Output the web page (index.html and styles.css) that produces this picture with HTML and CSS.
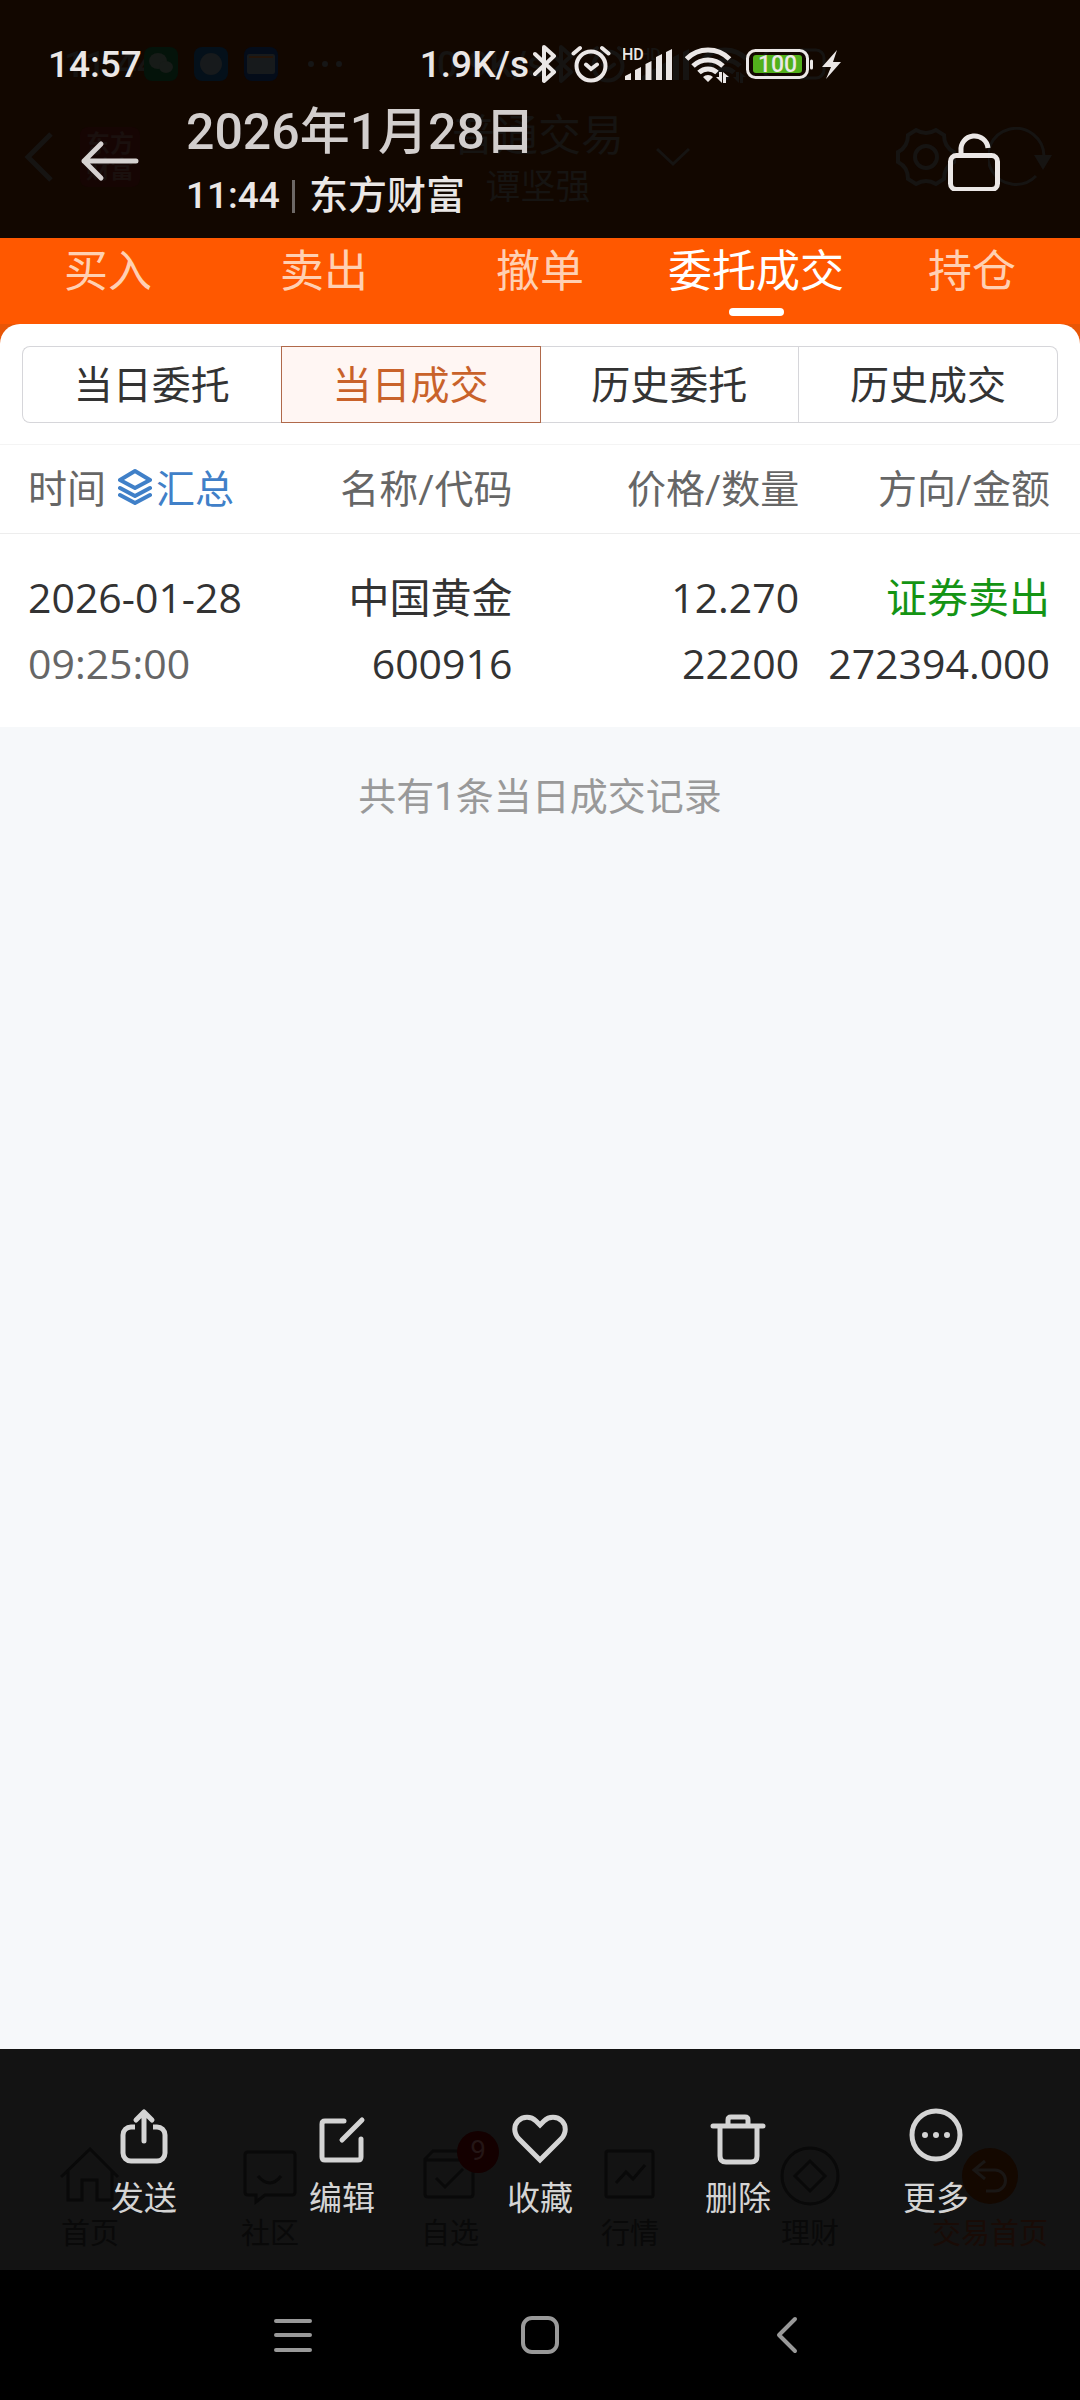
FILE: index.html
```html
<!DOCTYPE html>
<html lang="zh-CN">
<head>
    <meta charset="UTF-8">
    <meta name="viewport" content="width=device-width, initial-scale=1.0">
    <title>当日成交</title>
    <link rel="stylesheet" href="styles.css">
</head>
<body>
    <!-- Shared status bar icons -->
    <svg class="sprite" aria-hidden="true">
        <symbol id="bluetooth" viewBox="0 0 26 40">
            <path d="M2 10 21 28 11 37V3L21 12 2 30" fill="none" stroke="currentColor" stroke-width="4" stroke-linejoin="round" stroke-linecap="round"/>
        </symbol>
        <symbol id="alarm" viewBox="0 0 40 40">
            <g fill="none" stroke="currentColor" stroke-width="4" stroke-linecap="round">
                <circle cx="20" cy="22" r="14.5"/>
                <path d="M15 20.500l5 4.500 6-4.500M2.500 9.500 9 4M37.500 9.500 31 4"/>
            </g>
        </symbol>
        <symbol id="signal" viewBox="0 0 50 40">
            <text x="-1" y="16" font-size="16" font-weight="500" fill="currentColor">HD</text>
            <path d="M2 36v-4l6-3v7zM12 36V26l6-3v13zM22.500 36V20l6-3v19zM33 36V13l6-3v26zM43 36V8l6-3v31z" fill="currentColor"/>
        </symbol>
        <symbol id="wifi" viewBox="0 0 48 40">
            <g fill="none" stroke="currentColor" stroke-width="5">
                <path d="M1.500 15a30 30 0 0 1 43 0M8 22a21.500 21.500 0 0 1 30 0M14 28.500a13 13 0 0 1 18 0"/>
            </g>
            <path d="M18 33a7 7 0 0 1 10 0l-5 5zM31 33h3v-5h3v11zM38 39V28l6 5h-3v6z" fill="currentColor"/>
        </symbol>
        <symbol id="battery" viewBox="0 0 96 40">
            <rect x="2.500" y="6.500" width="60" height="27" rx="8" fill="none" stroke="currentColor" stroke-width="3"/>
            <rect class="charge" x="8" y="11" width="49" height="18" rx="3"/>
            <path d="M66.500 17v7" stroke="currentColor" stroke-width="3" stroke-linecap="round"/>
            <text x="32.500" y="28" font-size="23" font-weight="500" text-anchor="middle" fill="currentColor">100</text>
            <path d="M92 6 77 23h9l-5 12 15-17h-8z" fill="currentColor"/>
        </symbol>
    </svg>

    <header class="viewer-top">
        <div class="behind" aria-hidden="true">
            <div class="status-bar behind-status">
                <span class="time">11:44</span>
                <span class="notif">
                    <svg width="34" height="36" viewBox="0 0 34 36"><rect y="1" width="34" height="34" rx="8" fill="#04130a"/><ellipse cx="14" cy="15" rx="9" ry="8" fill="#171b18"/><ellipse cx="22" cy="21" rx="7" ry="6" fill="#171b18"/></svg>
                    <svg width="34" height="36" viewBox="0 0 34 36"><rect y="1" width="34" height="34" rx="8" fill="#04101a"/><circle cx="17" cy="18" r="11" fill="#171a1c"/></svg>
                    <svg width="34" height="36" viewBox="0 0 34 36"><rect y="1" width="34" height="34" rx="8" fill="#040c19"/><rect x="3" y="8" width="28" height="20" rx="2" fill="#171a1c"/><path d="M5 11h24" stroke="#24150a" stroke-width="2"/></svg>
                    <svg class="dots" width="34" height="36" viewBox="0 0 34 36" fill="#161616"><circle cx="17" cy="18" r="3"/><circle cx="3" cy="18" r="3"/><circle cx="31" cy="18" r="3"/></svg>
                </span>
                <span class="status-icons">
                    <span class="net"><span>0.9K/s</span><svg width="26" height="40"><use href="#bluetooth"/></svg></span>
                    <svg width="40" height="40"><use href="#alarm"/></svg>
                    <svg width="50" height="40"><use href="#signal"/></svg>
                    <svg width="48" height="40"><use href="#wifi"/></svg>
                    <svg width="96" height="40" viewBox="0 0 96 40"><rect x="2" y="6" width="60" height="28" rx="8" fill="none" stroke="currentColor" stroke-width="3"/></svg>
                </span>
            </div>
            <div class="behind-bar">
                <span class="behind-side">
                    <svg width="30" height="52" viewBox="0 0 30 52"><path d="M27 3 4 26l23 23" fill="none" stroke="currentColor" stroke-width="5"/></svg>
                    <span class="behind-logo">东方<br>财富</span>
                </span>
                <span class="behind-title">
                    <span class="behind-name">普通交易<small>谭坚强</small></span>
                    <svg width="34" height="20" viewBox="0 0 34 20"><path d="M1 2l16 15L33 2" fill="none" stroke="currentColor" stroke-width="3"/></svg>
                </span>
                <span class="behind-side behind-right">
                    <svg width="60" height="60" viewBox="0 0 60 60" fill="none" stroke="currentColor" stroke-width="4"><path d="M20 3q10 6 20 0l8 5q0 12 10 17v10q-10 5-10 17l-8 5q-10-6-20 0l-8-5q0-12-10-17V25q10-5 10-17z"/><circle cx="30" cy="30" r="11"/></svg>
                    <svg width="64" height="60" viewBox="0 0 64 60"><path d="M48 49A28 28 0 1 1 56 30" fill="none" stroke="currentColor" stroke-width="3"/><path d="M46 28h18l-9 15z" fill="currentColor"/></svg>
                </span>
            </div>
        </div>

        <div class="status-bar">
            <span class="time">14:57</span>
            <span class="status-icons">
                <span class="net"><span>1.9K/s</span><svg width="26" height="40"><use href="#bluetooth"/></svg></span>
                <svg width="40" height="40"><use href="#alarm"/></svg>
                <svg width="50" height="40"><use href="#signal"/></svg>
                <svg width="48" height="40"><use href="#wifi"/></svg>
                <svg width="96" height="40"><use href="#battery"/></svg>
            </span>
        </div>

        <div class="title-bar">
            <button type="button" class="icon-button" aria-label="返回">
                <svg width="60" height="60" viewBox="0 0 60 60" fill="none" stroke="#d6d2d1" stroke-width="5" stroke-linecap="round" stroke-linejoin="round"><path d="M21 13 4 30l17 17M4 30h52"/></svg>
            </button>
            <div class="title-text">
                <h1>2026年1月28日</h1>
                <p><span>11:44</span><span class="source">东方财富</span></p>
            </div>
            <button type="button" class="icon-button" aria-label="解锁">
                <svg width="60" height="60" viewBox="0 0 60 60" fill="none" stroke="#ebe7e6" stroke-width="5"><rect x="6.500" y="24.500" width="47" height="34" rx="6"/><path d="M17 25v-5a13.500 13.500 0 0 1 27-3"/></svg>
            </button>
        </div>
    </header>

    <nav class="tabs">
        <button type="button">买入</button>
        <button type="button">卖出</button>
        <button type="button">撤单</button>
        <button type="button" class="active">委托成交</button>
        <button type="button">持仓</button>
    </nav>

    <main>
        <div class="panel-edge">
            <section class="panel">
                <div class="segments">
                    <button type="button">当日委托</button>
                    <button type="button" class="active">当日成交</button>
                    <button type="button">历史委托</button>
                    <button type="button">历史成交</button>
                </div>

                <table class="deals">
                    <thead>
                        <tr>
                            <th>
                                <span class="time-head">时间
                                    <button type="button" class="summary">
                                        <svg width="34" height="38" viewBox="0 0 34 38" fill="none" stroke="currentColor" stroke-width="4" stroke-linejoin="round" stroke-linecap="round"><path d="M17 4 32 13 17 21 2 13zM2 21l15 8 15-8M2 28l15 8 15-8"/></svg>汇总
                                    </button>
                                </span>
                            </th>
                            <th>名称/代码</th>
                            <th>价格/数量</th>
                            <th>方向/金额</th>
                        </tr>
                    </thead>
                    <tbody>
                        <tr>
                            <td>2026-01-28<span class="muted">09:25:00</span></td>
                            <td>中国黄金<span>600916</span></td>
                            <td>12.270<span>22200</span></td>
                            <td><b class="sell">证券卖出</b><span>272394.000</span></td>
                        </tr>
                    </tbody>
                </table>
            </section>
        </div>
        <p class="count">共有1条当日成交记录</p>
    </main>

    <footer class="viewer-bottom">
        <div class="behind behind-tabs" aria-hidden="true">
            <span>
                <svg width="60" height="60" viewBox="0 0 60 60"><path d="M1 31 30 3l28 28M8 25v29h14V34h15v20h15V25"/></svg>
                首页
            </span>
            <span>
                <svg width="60" height="60" viewBox="0 0 60 60"><path d="M8 6h44q3 0 3 3v37q0 3-3 3H25l-9 7v-7H8q-3 0-3-3V9q0-3 3-3zM18 30q12 14 23 0"/></svg>
                社区
            </span>
            <span>
                <svg width="60" height="60" viewBox="0 0 60 60"><path d="M5 14h48v34q0 3-3 3H8q-3 0-3-3V13l8-8h32l8 8M16 32l9 9 18-18"/></svg>
                <i class="badge">9</i>
                自选
            </span>
            <span>
                <svg width="60" height="60" viewBox="0 0 60 60"><rect x="6" y="5" width="47" height="46" rx="2"/><path d="M16 37l10-11 7 7 12-14"/></svg>
                行情
            </span>
            <span>
                <svg width="60" height="60" viewBox="0 0 60 60"><circle cx="30" cy="30" r="28"/><path d="M30 15l15 15-15 15-15-15z"/></svg>
                理财
            </span>
            <span class="behind-active">
                <svg width="60" height="60" viewBox="0 0 60 60"><circle cx="30" cy="30" r="28" fill="#140800" stroke="none"/><path d="M25 15 14 24l11 9M14 24h21a10 10 0 0 1 0 21h-9" stroke="#1a1715"/></svg>
                交易首页
            </span>
        </div>

        <div class="actions">
            <button type="button">
                <svg width="60" height="60" viewBox="0 0 60 60"><path d="M21 20h-4a8 8 0 0 0-8 8v18a8 8 0 0 0 8 8h26a8 8 0 0 0 8-8V28a8 8 0 0 0-8-8h-4" stroke-linecap="butt"/><path d="M30 34V6M22 13l8-8 8 8"/></svg>
                发送
            </button>
            <button type="button">
                <svg width="60" height="60" viewBox="0 0 60 60"><path d="M32 14H13q-3 0-3 3v33q0 3 3 3h33q3 0 3-3V32M50 13 30 33"/></svg>
                编辑
            </button>
            <button type="button">
                <svg width="60" height="60" viewBox="0 0 60 60"><path d="M30 53 9 32C3 26 4 18 8 14c5-5 13-5 18 0l4 4 4-4c5-5 13-5 18 0 4 4 5 12-1 18z" stroke-linejoin="miter"/></svg>
                收藏
            </button>
            <button type="button">
                <svg width="60" height="60" viewBox="0 0 60 60"><path d="M5 19h50M12 19v30q0 6 6 6h25q6 0 6-6V19M20 19v-6q0-3 3-3h14q3 0 3 3v6"/></svg>
                删除
            </button>
            <button type="button">
                <svg width="60" height="60" viewBox="0 0 60 60"><circle cx="30" cy="28" r="24"/><path d="M19 28h0M30 28h0M41 28h0" stroke-width="6"/></svg>
                更多
            </button>
        </div>
    </footer>

    <nav class="system-nav">
        <button type="button" aria-label="最近任务">
            <svg width="40" height="40" viewBox="0 0 40 40"><path d="M3 6h34M3 20h34M3 35h34"/></svg>
        </button>
        <button type="button" aria-label="主屏幕">
            <svg width="40" height="40" viewBox="0 0 40 40"><rect x="3" y="3" width="34" height="34" rx="9"/></svg>
        </button>
        <button type="button" aria-label="返回">
            <svg width="40" height="40" viewBox="0 0 40 40"><path d="M28 4 12 20l16 16"/></svg>
        </button>
    </nav>
</body>
</html>
```

FILE: styles.css
```css
:root {
    --orange: #ff5800;
    --top-bg: #120700;
    --toolbar-bg: #131313;
    --page-bg: #f6f8fa;
    --text-color: #333;
    --muted-color: #666;
    --line-color: #ededed;
}

* {
    box-sizing: border-box;
}
body {
    font-family: Roboto, "Noto Sans CJK SC", sans-serif;
    background-color: var(--page-bg);
    color: var(--text-color);
    margin: 0;
    min-height: 100vh;
    display: flex;
    flex-direction: column;
}
button {
    font: inherit;
    color: inherit;
    background: none;
    border: none;
    padding: 0;
    cursor: pointer;
}
svg {
    display: block;
    flex: none;
}
h1, p {
    margin: 0;
}
.sprite {
    display: none;
}

/* Top overlay */
.viewer-top {
    position: relative;
    background-color: var(--top-bg);
    color: #ebe7e6;
    padding: 33px 0 11px;
}
.status-bar {
    position: relative;
    display: flex;
    align-items: center;
    height: 62px;
    padding: 0 239px 0 48px;
    font-size: 37px;
    font-weight: 500;
}
.status-icons {
    display: flex;
    align-items: center;
    gap: 12px;
    margin-left: auto;
}
.net {
    display: flex;
    align-items: center;
    gap: 4px;
}
.charge {
    fill: #52b01c;
}
.title-bar {
    position: relative;
    display: flex;
    align-items: center;
    height: 132px;
    padding: 0 76px 0 80px;
}
.title-text {
    flex: 1;
    margin-left: 46px;
}
.title-text h1 {
    font-size: 50px;
    font-weight: 500;
    line-height: 70px;
    color: #d2cecd;
}
.title-text p {
    display: flex;
    align-items: center;
    font-size: 37px;
    font-weight: 500;
    line-height: 58px;
}
.source {
    display: flex;
    align-items: center;
    font-size: 39px;
}
.source::before {
    content: "";
    width: 3px;
    height: 33px;
    margin: 0 14px 0 12px;
    background-color: #6d6866;
}

/* Dimmed app screen showing through the overlays */
.behind {
    position: absolute;
    inset: 0;
    color: #161412;
}
.behind-status {
    margin-top: 33px;
    padding: 0 222px 0 64px;
}
.behind-status .time {
    width: 80px;
}
.notif {
    display: flex;
    gap: 16px;
}
.notif .dots {
    margin-left: 14px;
}
.behind-bar {
    display: flex;
    align-items: center;
    justify-content: space-between;
    height: 124px;
    padding: 0 28px 0 24px;
}
.behind-side {
    flex: 1;
    display: flex;
    align-items: center;
    gap: 26px;
}
.behind-right {
    justify-content: flex-end;
    gap: 32px;
}
.behind-logo {
    padding: 4px 6px;
    border-radius: 8px;
    background-color: #160503;
    color: #1a100e;
    font-size: 24px;
    font-weight: 700;
    line-height: 26px;
}
.behind-title {
    display: flex;
    align-items: center;
    gap: 32px;
    margin-left: 66px;
}
.behind-name {
    font-size: 43px;
    line-height: 62px;
    text-align: center;
}
.behind-name small {
    display: block;
    font-size: 35px;
    line-height: 42px;
}

/* Trade tabs */
.tabs {
    display: flex;
    background-color: var(--orange);
    color: #ffd0b3;
    font-size: 44px;
    line-height: 68px;
}
.tabs button {
    flex: 1 1 0;
    height: 86px;
    display: flex;
    flex-direction: column;
    align-items: center;
    white-space: nowrap;
}
.tabs button::after {
    content: "";
    width: 55px;
    height: 8px;
    margin-top: 2px;
    border-radius: 4px;
}
.tabs .active {
    color: #fff;
}
.tabs .active::after {
    background-color: #fff;
}

/* Deals panel */
main {
    flex: 1;
}
.panel-edge {
    background-color: #e85606;
}
.panel {
    background-color: #fff;
    border-radius: 20px 20px 0 0;
    padding-top: 22px;
}
.segments {
    display: flex;
    height: 77px;
    margin: 0 22px 21px;
    font-size: 39px;
}
.segments button {
    flex: 1 1 0;
    padding-bottom: 6px;
    border: 1px solid #d6d6da;
    border-left-width: 0;
    white-space: nowrap;
}
.segments button:first-child {
    border-left-width: 1px;
    border-right-width: 0;
    border-radius: 8px 0 0 8px;
}
.segments button:last-child {
    border-radius: 0 8px 8px 0;
}
.segments .active {
    border: 1px solid #b0694a;
    background-color: #fff6f3;
    color: #c9622a;
}
.deals {
    width: 100%;
    table-layout: fixed;
    border-collapse: collapse;
    text-align: right;
}
.deals th {
    height: 89px;
    padding: 0 0 6px;
    border-top: 1px solid #f4f4f4;
    border-bottom: 1px solid var(--line-color);
    font-size: 39px;
    font-weight: 400;
    color: var(--muted-color);
}
.deals th:first-child {
    width: 25%;
}
.deals th:nth-child(2) {
    width: 23%;
}
.deals th:nth-child(3) {
    width: 26%;
}
.deals th:first-child, .deals td:first-child {
    padding-left: 28px;
    text-align: left;
}
.deals th:nth-child(2), .deals td:nth-child(2) {
    padding-right: 6px;
}
.deals th:last-child, .deals td:last-child {
    padding-right: 30px;
}
.deals td {
    padding: 30px 0 31px;
    font-family: "Open Sans", "Noto Sans CJK SC", sans-serif;
    font-size: 41px;
    line-height: 66px;
    white-space: nowrap;
}
.deals td span {
    display: block;
}
.deals .muted {
    color: var(--muted-color);
}
.deals .sell {
    font-weight: 400;
    color: #149414;
}
.time-head {
    display: flex;
    align-items: center;
    gap: 12px;
}
.summary {
    display: flex;
    align-items: center;
    gap: 4px;
    color: #4080c8;
    white-space: nowrap;
}
.count {
    padding-top: 41px;
    text-align: center;
    font-size: 38px;
    line-height: 58px;
    color: #999;
}

/* Bottom overlay */
.viewer-bottom {
    position: relative;
    background-color: var(--toolbar-bg);
}
.actions {
    position: relative;
    display: flex;
    height: 221px;
    padding: 58px 45px 0;
}
.actions button {
    flex: 1 1 0;
    display: flex;
    flex-direction: column;
    align-items: center;
    gap: 12px;
    font-size: 33px;
    line-height: 40px;
    color: #d4d4d4;
}
.actions svg {
    fill: none;
    stroke: #d4d4d4;
    stroke-width: 5;
    stroke-linecap: round;
    stroke-linejoin: round;
}
.behind-tabs {
    display: flex;
    padding-top: 97px;
    color: #090909;
    font-size: 29px;
    line-height: 40px;
}
.behind-tabs > span {
    position: relative;
    flex: 1 1 0;
    display: flex;
    flex-direction: column;
    align-items: center;
    gap: 8px;
}
.behind-tabs svg {
    fill: none;
    stroke: currentColor;
    stroke-width: 3;
}
.behind-tabs .behind-active {
    color: #190b06;
}
.badge {
    position: absolute;
    top: -15px;
    left: calc(50% + 7px);
    width: 42px;
    height: 42px;
    border-radius: 50%;
    background-color: #140000;
    color: #241616;
    font-size: 28px;
    font-style: normal;
    text-align: center;
}

/* Android navigation */
.system-nav {
    display: flex;
    justify-content: center;
    height: 130px;
    padding: 0 169px;
    background-color: #000;
}
.system-nav button {
    flex: 1 1 0;
    display: flex;
    align-items: center;
    justify-content: center;
}
.system-nav svg {
    fill: none;
    stroke: #999;
    stroke-width: 4;
    stroke-linecap: round;
    stroke-linejoin: round;
}
```
